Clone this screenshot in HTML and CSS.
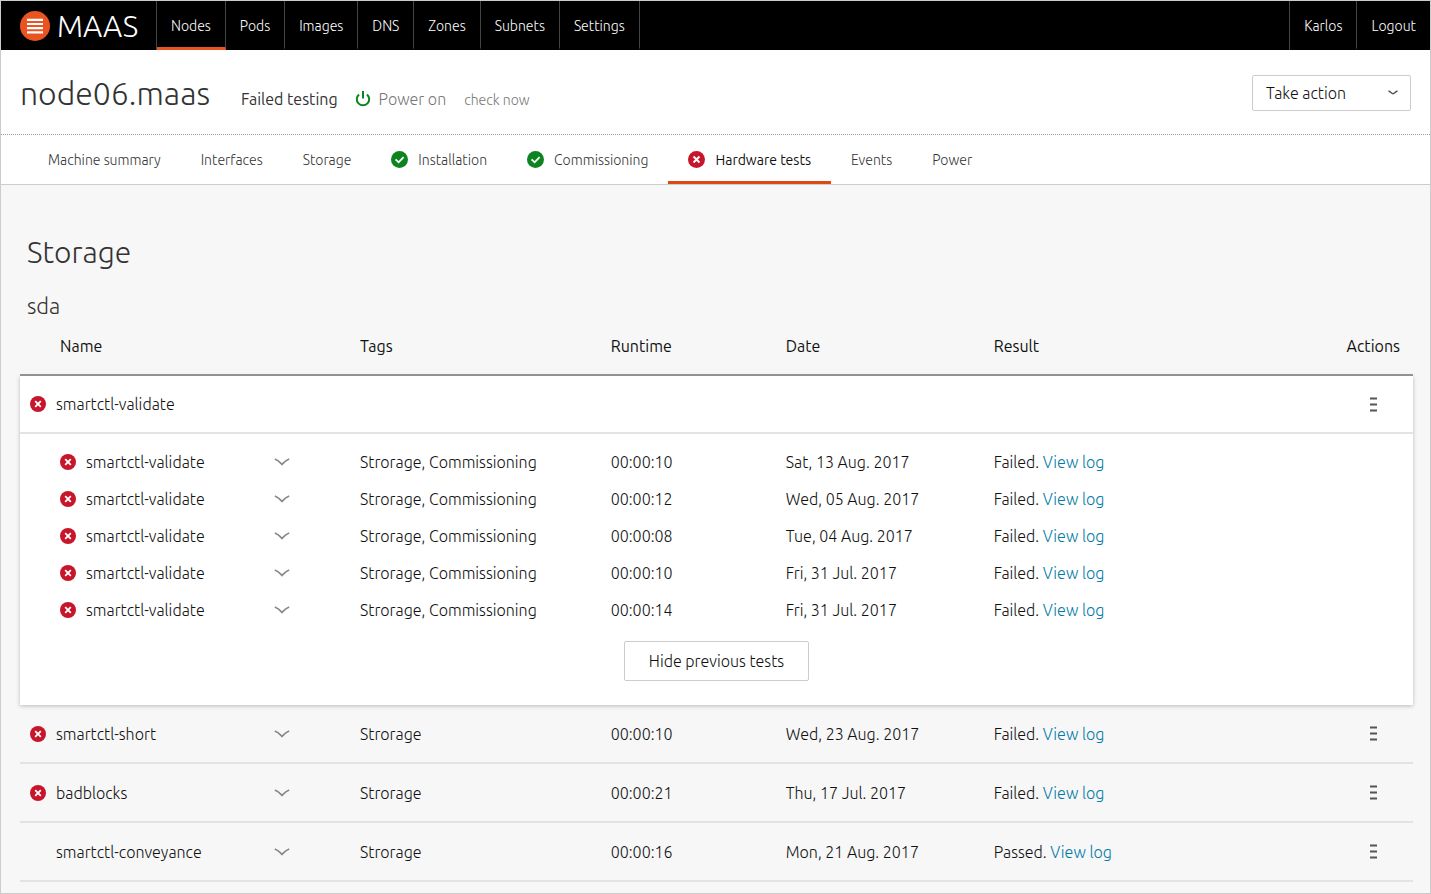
FILE: index.html
```html
<!DOCTYPE html>
<html lang="en">
<head>
<meta charset="utf-8">
<title>node06.maas | MAAS</title>
<link rel="stylesheet" href="styles.css">
</head>
<body>
<svg class="sprite" aria-hidden="true">
  <symbol id="i-error" viewBox="0 0 16 16"><circle cx="8" cy="8" r="8" fill="#c7162b"/><path d="M5.2 5.200l5.600 5.600M10.800 5.200l-5.600 5.600" stroke="#fff" stroke-width="1.800" fill="none"/></symbol>
  <symbol id="i-ok" viewBox="0 0 17 17"><circle cx="8.500" cy="8.500" r="8.500" fill="#0e8420"/><path d="M4.600 8.300l3 3 5-5.200" stroke="#fff" stroke-width="1.800" fill="none"/></symbol>
  <symbol id="i-chevron" viewBox="0 0 16 8"><path d="M0.800 1C3.800 2 6 4.200 8 6.400 10 4.200 12.200 2 15.200 1" stroke="#888" stroke-width="1.700" fill="none"/></symbol>
  <symbol id="i-menu" viewBox="0 0 7 15"><path d="M0 1.500h7M0 7.500h7M0 13.500h7" stroke="#555" stroke-width="2"/></symbol>
</svg>
<div class="page">
  <header class="topbar">
    <a class="logo" href="#">
      <svg class="logo-mark" viewBox="0 0 30 30" aria-hidden="true"><circle cx="15" cy="15" r="15" fill="#e95420"/><path d="M7 8.800h16M7 13h16M7 17.200h16M7 21.400h16" stroke="#fff" stroke-width="2.200"/></svg>
      <span>MAAS</span>
    </a>
    <nav class="nav">
      <a class="nav-link active" href="#">Nodes</a>
      <a class="nav-link" href="#">Pods</a>
      <a class="nav-link" href="#">Images</a>
      <a class="nav-link" href="#">DNS</a>
      <a class="nav-link" href="#">Zones</a>
      <a class="nav-link" href="#">Subnets</a>
      <a class="nav-link" href="#">Settings</a>
    </nav>
    <nav class="nav nav-user">
      <a class="nav-link" href="#">Karlos</a>
      <a class="nav-link" href="#">Logout</a>
    </nav>
  </header>

  <div class="title-bar">
    <h1 class="title">node06.maas</h1>
    <span class="status">Failed testing</span>
    <span class="power"><svg class="power-icon" viewBox="0 0 16 16" aria-hidden="true"><path d="M4 3.400a6.200 6.200 0 1 0 8 0M8 0v7.500" stroke="#0e8420" stroke-width="2" fill="none"/></svg>Power on</span>
    <a class="check" href="#">check now</a>
    <div class="select">
      <select aria-label="Take action"><option>Take action</option></select>
      <svg class="select-icon" viewBox="0 0 10 6" aria-hidden="true"><path d="M0.500 1C2.500 1.500 3.500 3.800 5 3.800S7.500 1.500 9.500 1" stroke="#555" stroke-width="1.500" fill="none"/></svg>
    </div>
  </div>

  <nav class="tabs">
    <a class="tab" href="#">Machine summary</a>
    <a class="tab" href="#">Interfaces</a>
    <a class="tab" href="#">Storage</a>
    <a class="tab" href="#"><svg class="tab-icon" aria-hidden="true"><use href="#i-ok"/></svg>Installation</a>
    <a class="tab" href="#"><svg class="tab-icon" aria-hidden="true"><use href="#i-ok"/></svg>Commissioning</a>
    <a class="tab active" href="#"><svg class="tab-icon" aria-hidden="true"><use href="#i-error"/></svg>Hardware tests</a>
    <a class="tab" href="#">Events</a>
    <a class="tab" href="#">Power</a>
  </nav>

  <main class="content">
    <h2 class="heading">Storage</h2>
    <h3 class="subheading">sda</h3>
    <table class="tests">
      <colgroup><col class="c-name"><col class="c-tags"><col class="c-runtime"><col class="c-date"><col class="c-result"><col class="c-actions"></colgroup>
      <thead>
        <tr><th class="indent">Name</th><th>Tags</th><th>Runtime</th><th>Date</th><th>Result</th><th class="actions-head">Actions</th></tr>
      </thead>
      <tbody class="card">
        <tr class="row group">
          <td colspan="5"><div class="name"><svg class="icon"><use href="#i-error"/></svg><span>smartctl-validate</span></div></td>
          <td class="actions"><button class="plain" aria-label="Actions"><svg class="menu"><use href="#i-menu"/></svg></button></td>
        </tr>
        <tr class="sub"><td><div class="name"><svg class="icon"><use href="#i-error"/></svg><span>smartctl-validate</span><button class="plain toggle" aria-label="Details"><svg class="chevron"><use href="#i-chevron"/></svg></button></div></td><td>Strorage, Commissioning</td><td>00:00:10</td><td>Sat, 13 Aug. 2017</td><td>Failed. <a href="#">View log</a></td><td></td></tr>
        <tr class="sub"><td><div class="name"><svg class="icon"><use href="#i-error"/></svg><span>smartctl-validate</span><button class="plain toggle" aria-label="Details"><svg class="chevron"><use href="#i-chevron"/></svg></button></div></td><td>Strorage, Commissioning</td><td>00:00:12</td><td>Wed, 05 Aug. 2017</td><td>Failed. <a href="#">View log</a></td><td></td></tr>
        <tr class="sub"><td><div class="name"><svg class="icon"><use href="#i-error"/></svg><span>smartctl-validate</span><button class="plain toggle" aria-label="Details"><svg class="chevron"><use href="#i-chevron"/></svg></button></div></td><td>Strorage, Commissioning</td><td>00:00:08</td><td>Tue, 04 Aug. 2017</td><td>Failed. <a href="#">View log</a></td><td></td></tr>
        <tr class="sub"><td><div class="name"><svg class="icon"><use href="#i-error"/></svg><span>smartctl-validate</span><button class="plain toggle" aria-label="Details"><svg class="chevron"><use href="#i-chevron"/></svg></button></div></td><td>Strorage, Commissioning</td><td>00:00:10</td><td>Fri, 31 Jul. 2017</td><td>Failed. <a href="#">View log</a></td><td></td></tr>
        <tr class="sub"><td><div class="name"><svg class="icon"><use href="#i-error"/></svg><span>smartctl-validate</span><button class="plain toggle" aria-label="Details"><svg class="chevron"><use href="#i-chevron"/></svg></button></div></td><td>Strorage, Commissioning</td><td>00:00:14</td><td>Fri, 31 Jul. 2017</td><td>Failed. <a href="#">View log</a></td><td></td></tr>
        <tr><td class="card-foot" colspan="6"><button class="button">Hide previous tests</button></td></tr>
      </tbody>
      <tbody>
        <tr class="row"><td><div class="name"><svg class="icon"><use href="#i-error"/></svg><span>smartctl-short</span><button class="plain toggle" aria-label="Details"><svg class="chevron"><use href="#i-chevron"/></svg></button></div></td><td>Strorage</td><td>00:00:10</td><td>Wed, 23 Aug. 2017</td><td>Failed. <a href="#">View log</a></td><td class="actions"><button class="plain" aria-label="Actions"><svg class="menu"><use href="#i-menu"/></svg></button></td></tr>
        <tr class="row"><td><div class="name"><svg class="icon"><use href="#i-error"/></svg><span>badblocks</span><button class="plain toggle" aria-label="Details"><svg class="chevron"><use href="#i-chevron"/></svg></button></div></td><td>Strorage</td><td>00:00:21</td><td>Thu, 17 Jul. 2017</td><td>Failed. <a href="#">View log</a></td><td class="actions"><button class="plain" aria-label="Actions"><svg class="menu"><use href="#i-menu"/></svg></button></td></tr>
        <tr class="row"><td><div class="name no-icon"><span>smartctl-conveyance</span><button class="plain toggle" aria-label="Details"><svg class="chevron"><use href="#i-chevron"/></svg></button></div></td><td>Strorage</td><td>00:00:16</td><td>Mon, 21 Aug. 2017</td><td>Passed. <a href="#">View log</a></td><td class="actions"><button class="plain" aria-label="Actions"><svg class="menu"><use href="#i-menu"/></svg></button></td></tr>
      </tbody>
    </table>
  </main>
</div>
</body>
</html>
```
FILE: styles.css
```css
* {
  box-sizing: border-box;
}

body {
  margin: 0;
  background: #f7f7f7;
  color: #111;
  font: 300 16px/24px Ubuntu, "Open Sans", sans-serif;
}

a {
  color: #007aa6;
  text-decoration: none;
}

svg {
  display: block;
  flex: none;
}

.sprite {
  display: none;
}

.page {
  min-height: 100vh;
  border: 1px solid #ccc;
}

/* Top navigation */
.topbar {
  display: flex;
  height: 49px;
  background: #000;
}

.logo {
  display: flex;
  align-items: center;
  gap: 7px;
  width: 155px;
  padding-left: 19px;
  color: #fff;
  font-size: 30px;
}

.logo-mark {
  width: 30px;
  height: 30px;
}

.nav {
  display: flex;
  border-left: 1px solid #444;
}

.nav-user {
  margin-left: auto;
}

.nav-link {
  display: flex;
  align-items: center;
  padding: 3px 14px 0;
  border-right: 1px solid #444;
  border-bottom: 3px solid transparent;
  color: #fff;
  font-size: 14px;
}

.nav-user .nav-link:last-child {
  border-right: 0;
}

.nav-link.active {
  border-bottom-color: #e95420;
}

/* Machine header */
.title-bar {
  display: flex;
  align-items: baseline;
  height: 85px;
  padding: 23px 19px 0;
  border-bottom: 1px dotted #999;
  background: #fff;
}

.title {
  margin: 0;
  color: #333;
  font-size: 32px;
  font-weight: 300;
  line-height: 40px;
}

.status {
  margin-left: 31px;
  font-weight: 400;
  color: #333;
}

.power {
  display: flex;
  align-items: baseline;
  gap: 8px;
  margin-left: 17px;
  color: #777;
}

.power-icon {
  align-self: center;
  width: 16px;
  height: 16px;
}

.check {
  margin-left: 18px;
  color: #777;
  font-size: 14px;
}

.select {
  position: relative;
  align-self: flex-start;
  width: 159px;
  margin: 2px 0 0 auto;
}

.select select {
  width: 100%;
  height: 36px;
  padding: 0 13px;
  border: 1px solid #ccc;
  border-radius: 2px;
  appearance: none;
  background: #fff;
  color: #111;
  font: inherit;
}

.select-icon {
  position: absolute;
  top: 15px;
  right: 13px;
  width: 10px;
  height: 6px;
  pointer-events: none;
}

/* Tabs */
.tabs {
  display: flex;
  height: 50px;
  padding-left: 27px;
  border-bottom: 1px solid #ccc;
  background: #fff;
}

.tab {
  display: flex;
  align-items: center;
  gap: 10px;
  padding: 3px 20px 0;
  border-bottom: 3px solid transparent;
  color: #333;
  font-size: 14px;
}

.tab.active {
  border-bottom-color: #dd4814;
  color: #111;
  font-weight: 400;
}

.tab-icon {
  width: 17px;
  height: 17px;
}

/* Test results */
.content {
  padding: 47px 17px 10px 19px;
}

.heading,
.subheading {
  margin: 0 0 0 7px;
  color: #333;
  font-weight: 300;
}

.heading {
  font-size: 30px;
  line-height: 40px;
}

.subheading {
  margin-top: 18px;
  font-size: 22px;
  line-height: 32px;
}

.tests {
  width: 100%;
  table-layout: fixed;
  border-collapse: separate;
  border-spacing: 0;
}

.c-name { width: 340px; }
.c-tags { width: 18%; }
.c-runtime { width: 175px; }
.c-date { width: 208px; }
.c-actions { width: 80px; }

.tests th,
.tests td {
  padding: 0;
  text-align: left;
}

.tests th {
  height: 54px;
  padding-bottom: 4px;
  border-bottom: 2px solid #999;
  font-weight: 400;
}

.tests .indent {
  padding-left: 40px;
}

.tests .actions-head {
  padding-right: 13px;
  text-align: right;
}

.tests .actions {
  padding-right: 32px;
}

.card {
  background: #fff;
  box-shadow: 0 1px 4px rgba(0, 0, 0, .25);
}

.row td {
  height: 59px;
  border-bottom: 2px solid #e3e3e3;
}

.group td {
  height: 58px;
}

.sub td {
  height: 37px;
}

.row + .sub td {
  height: 46px;
  padding-top: 9px;
}

.name {
  display: flex;
  align-items: center;
  gap: 10px;
  padding-left: 10px;
}

.sub .name {
  padding-left: 40px;
}

.name.no-icon {
  padding-left: 36px;
}

.icon {
  width: 16px;
  height: 16px;
}

.plain {
  display: block;
  padding: 4px;
  border: 0;
  background: none;
}

.actions .plain {
  margin-left: auto;
}

.toggle {
  margin: 0 66px 0 auto;
}

.chevron {
  width: 16px;
  height: 8px;
}

.menu {
  width: 7px;
  height: 15px;
}

.tests .card-foot {
  padding: 13px 0 24px;
  text-align: center;
}

.button {
  height: 40px;
  padding: 0 24px;
  border: 1px solid #ccc;
  border-radius: 2px;
  background: #fff;
  color: #111;
  font: inherit;
}
```
